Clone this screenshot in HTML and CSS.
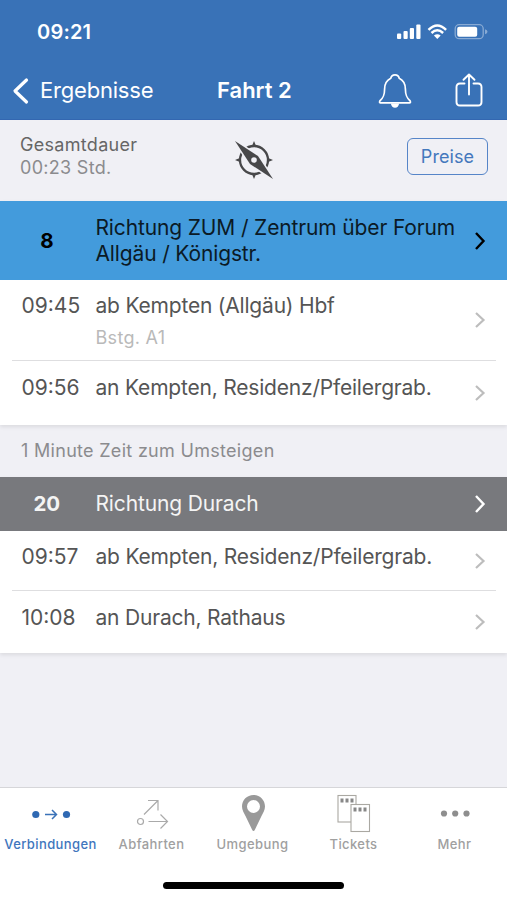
FILE: index.html
```html
<!DOCTYPE html>
<html lang="de">
<head>
  <meta charset="UTF-8">
  <title>Fahrt 2</title>
  <meta name="viewport" content="width=device-width, initial-scale=1.0">
  <link rel="stylesheet" href="styles.css">
</head>
<body>
  <header>
    <div class="status-bar">
      <span class="clock">09:21</span>
      <svg class="status-icons" width="92" height="18" viewBox="0 0 92 18">
        <g fill="#fff">
          <rect x="1" y="9.500" width="4.200" height="5.500" rx="1"/>
          <rect x="7.500" y="7" width="4.200" height="8" rx="1"/>
          <rect x="13.800" y="4" width="4.200" height="11" rx="1"/>
          <rect x="20.300" y="0.500" width="4.200" height="14.500" rx="1"/>
          <path d="M41.300 15 L37.900 11.500 Q41.300 9 44.700 11.500 Z"/>
        </g>
        <g fill="none" stroke="#fff" stroke-width="2.500">
          <path d="M32.500 5.800 Q41.300 -3 50.100 5.800"/>
          <path d="M35.500 9 Q41.300 3.500 47.100 9"/>
        </g>
        <rect x="59.200" y="0.700" width="28" height="14" rx="4" fill="none" stroke="#fff" stroke-opacity="0.400" stroke-width="1.300"/>
        <rect x="61.200" y="2.700" width="20" height="10" rx="2" fill="#fff"/>
        <path d="M89 5.300 Q91.500 6 91.500 7.700 Q91.500 9.400 89 10.200 Z" fill="#fff" fill-opacity="0.400"/>
      </svg>
    </div>
    <nav class="nav-bar">
      <a class="back">
        <svg width="17" height="28" viewBox="0 0 17 28"><path d="M14.500 3 L3 14 L14.500 25" fill="none" stroke="#fff" stroke-width="3.200" stroke-linecap="round" stroke-linejoin="round"/></svg>
        <span>Ergebnisse</span>
      </a>
      <h1>Fahrt 2</h1>
      <div class="actions">
        <svg width="34" height="36" viewBox="0 0 34 36">
          <path d="M17 1.800 C14.400 1.800 13.200 3.300 12.800 5.200 C8.500 7.300 6.600 11.500 6.600 16 C6.600 22.500 5.200 25 1.800 28 Q1 29.800 2.600 29.800 L31.400 29.800 Q33 29.800 32.200 28 C28.800 25 27.400 22.500 27.400 16 C27.400 11.500 25.500 7.300 21.200 5.200 C20.800 3.300 19.600 1.800 17 1.800 Z" fill="none" stroke="#fff" stroke-width="1.700" stroke-linejoin="round"/>
          <path d="M12.800 30.500 H21.200 Q20.300 34.700 17 34.700 Q13.700 34.700 12.800 30.500 Z" fill="#fff"/>
        </svg>
        <svg width="28" height="36" viewBox="0 0 28 36" fill="none" stroke="#fff" stroke-width="1.900" stroke-linecap="round">
          <path d="M9.500 10.500 H5 Q1.500 10.500 1.500 14 V29 Q1.500 32.500 5 32.500 H23 Q26.500 32.500 26.500 29 V14 Q26.500 10.500 23 10.500 H18.500"/>
          <path d="M14 21.500 V1.500 M8.500 6.800 L14 1.500 L19.500 6.800" stroke-linejoin="round"/>
        </svg>
      </div>
    </nav>
  </header>

  <section class="summary">
    <div class="duration">
      <div class="label">Gesamtdauer</div>
      <div class="value">00:23 Std.</div>
    </div>
    <svg class="compass" width="40" height="40" viewBox="0 0 40 40">
      <circle cx="20" cy="20" r="14" fill="none" stroke="#48484a" stroke-width="2.300"/>
      <g fill="#48484a">
        <path d="M20 1 L22.500 7 H17.500 Z M20 39 L17.500 33 H22.500 Z M1 20 L7 17.500 V22.500 Z M39 20 L33 22.500 V17.500 Z"/>
        <path d="M1 1 L24 16 L39 39 L16 24 Z" stroke="#f0f0f5" stroke-width="3"/>
        <path d="M1 1 L24 16 L39 39 L16 24 Z"/>
      </g>
      <circle cx="20" cy="20" r="2.800" fill="#f0f0f5"/>
    </svg>
    <button class="prices">Preise</button>
  </section>

  <main>
    <section class="leg">
      <div class="line line-blue">
        <span class="line-no">8</span>
        <span class="direction">Richtung ZUM / Zentrum über Forum Allgäu / Königstr.</span>
        <svg class="chevron" width="12" height="20" viewBox="0 0 12 20"><path d="M2 2 L9.500 10 L2 18"/></svg>
      </div>
      <div class="stop stop-platform">
        <span class="time">09:45</span>
        <div class="place">
          <div class="name">ab Kempten (Allgäu) Hbf</div>
          <div class="platform">Bstg. A1</div>
        </div>
        <svg class="chevron" width="12" height="20" viewBox="0 0 12 20"><path d="M2 3 L9.500 10 L2 17"/></svg>
      </div>
      <div class="stop stop-arrival">
        <span class="time">09:56</span>
        <div class="place">an Kempten, Residenz/Pfeilergrab.</div>
        <svg class="chevron" width="12" height="20" viewBox="0 0 12 20"><path d="M2 3 L9.500 10 L2 17"/></svg>
      </div>
    </section>

    <p class="transfer">1 Minute Zeit zum Umsteigen</p>

    <section class="leg">
      <div class="line line-grey">
        <span class="line-no">20</span>
        <span class="direction">Richtung Durach</span>
        <svg class="chevron" width="12" height="20" viewBox="0 0 12 20"><path d="M2 2 L9.500 10 L2 18"/></svg>
      </div>
      <div class="stop">
        <span class="time">09:57</span>
        <div class="place">ab Kempten, Residenz/Pfeilergrab.</div>
        <svg class="chevron" width="12" height="20" viewBox="0 0 12 20"><path d="M2 3 L9.500 10 L2 17"/></svg>
      </div>
      <div class="stop stop-last">
        <span class="time">10:08</span>
        <div class="place">an Durach, Rathaus</div>
        <svg class="chevron" width="12" height="20" viewBox="0 0 12 20"><path d="M2 3 L9.500 10 L2 17"/></svg>
      </div>
    </section>
  </main>

  <footer>
    <div class="tabs">
      <a class="tab active">
        <svg width="42" height="43" viewBox="0 0 42 43">
          <g fill="#2f69b3"><circle cx="5.800" cy="22.500" r="3.600"/><circle cx="36.500" cy="22.500" r="3.600"/></g>
          <path d="M15 22.500 H26.500 M22 18 L26.500 22.500 L22 27" fill="none" stroke="#3a72b8" stroke-width="1.500"/>
        </svg>
        <span>Verbindungen</span>
      </a>
      <a class="tab">
        <svg width="42" height="43" viewBox="0 0 42 43" fill="none" stroke="#aaa" stroke-width="1.200">
          <circle cx="9.500" cy="29.500" r="3"/>
          <path d="M13 22.500 L27 8.500 M17 8.500 H27 V18.500 M17.500 29.500 H36 M29.500 22.500 L36.500 29.500 L29.500 36.500"/>
        </svg>
        <span>Abfahrten</span>
      </a>
      <a class="tab">
        <svg width="42" height="43" viewBox="0 0 42 43">
          <path fill="#999" fill-rule="evenodd" d="M21.500 3 C15 3 10 8 10 14.500 C10 18 12 21 13.500 24 L20 37.500 Q21.500 40.500 23 37.500 L29.500 24 C31 21 33 18 33 14.500 C33 8 28 3 21.500 3 Z M21.500 8 A6.500 6.500 0 1 1 21.500 21 A6.500 6.500 0 1 1 21.500 8 Z"/>
        </svg>
        <span>Umgebung</span>
      </a>
      <a class="tab">
        <svg width="42" height="43" viewBox="0 0 42 43">
          <g fill="#fff" stroke="#aaa8a2" stroke-width="1.100">
            <rect x="5" y="3.500" width="18" height="26.500"/>
            <rect x="18" y="12.500" width="18.500" height="27"/>
          </g>
          <g fill="#888">
            <rect x="7.500" y="6.500" width="3" height="4"/><rect x="12.500" y="6.500" width="3" height="4"/><rect x="17.500" y="6.500" width="3" height="4"/>
            <rect x="20.500" y="15.500" width="3" height="4"/><rect x="25.500" y="15.500" width="3" height="4"/><rect x="30.500" y="15.500" width="3" height="4"/>
          </g>
        </svg>
        <span>Tickets</span>
      </a>
      <a class="tab">
        <svg width="42" height="43" viewBox="0 0 42 43" fill="#8e8e8e">
          <circle cx="10" cy="21.500" r="3.100"/><circle cx="21.200" cy="21.500" r="3.100"/><circle cx="32.500" cy="21.500" r="3.100"/>
        </svg>
        <span>Mehr</span>
      </a>
    </div>
    <div class="home-indicator"></div>
  </footer>
</body>
</html>
```
FILE: styles.css
```css
* {
  box-sizing: border-box;
}

body {
  margin: 0;
  height: 900px;
  display: flex;
  flex-direction: column;
  font-family: Inter, "Liberation Sans", sans-serif;
  background: #f0f0f5;
  color: #555;
}

header {
  height: 120px;
  background: #3972b7;
  border-bottom: 1px solid #3367b1;
  color: #fff;
}

.status-bar {
  height: 62px;
  padding: 2px 19px 0 37px;
  display: flex;
  justify-content: space-between;
  align-items: center;
}

.clock {
  font-size: 20px;
  font-weight: 600;
  letter-spacing: 0.2px;
}

.status-icons {
  margin-top: 1px;
}

.nav-bar {
  height: 57px;
  padding: 0 24px 0 12px;
  display: grid;
  grid-template-columns: 205px 1fr auto;
  align-items: center;
}

.back {
  display: flex;
  align-items: center;
  gap: 11px;
  font-size: 22px;
  letter-spacing: -0.2px;
}

.back span,
h1 {
  padding-bottom: 2px;
}

h1 {
  margin: 0;
  font-size: 22px;
  font-weight: 600;
  letter-spacing: 0;
}

.actions {
  display: flex;
  gap: 43px;
}

.summary {
  height: 81px;
  padding: 13px 19px 0 20px;
  display: grid;
  grid-template-columns: 1fr auto 1fr;
  align-items: start;
  font-size: 18px;
  line-height: 23px;
  letter-spacing: 0.3px;
}

.label {
  color: #666;
}

.value {
  color: #8b8b8e;
}

.compass {
  margin-top: 7px;
}

.prices {
  justify-self: end;
  width: 81px;
  height: 37px;
  margin-top: 5px;
  padding: 0;
  border: 1.500px solid #5685c8;
  border-radius: 6px;
  background: none;
  color: #4478bd;
  font-family: inherit;
  font-size: 18px;
  letter-spacing: 0.1px;
}

.leg {
  background: #fff;
  box-shadow: 0 2px 4px rgba(0, 0, 0, 0.09);
}

.line,
.stop {
  display: grid;
  grid-template-columns: 95.500px 1fr auto;
  align-items: center;
  padding-right: 21px;
  font-size: 21px;
  line-height: 26px;
  letter-spacing: -0.2px;
}

.chevron path {
  fill: none;
  stroke: #bdbdbd;
  stroke-width: 2.200px;
}

.line-no {
  font-size: 20.500px;
  font-weight: 700;
  text-align: center;
  padding-right: 2px;
}

.direction {
  letter-spacing: -0.140px;
}

.line-blue {
  height: 79px;
  background: #439bdc;
  color: #0b1a26;
}

.line-blue .line-no {
  color: #000;
}

.line-blue .chevron path {
  stroke: #000;
  stroke-width: 2.400px;
}

.line-grey {
  height: 54px;
  background: #78797d;
  color: #f4f4f4;
}

.line-grey .chevron path {
  stroke: #fff;
  stroke-width: 2.400px;
}

.stop {
  position: relative;
  height: 59px;
}

.stop + .stop::before {
  content: "";
  position: absolute;
  top: 0;
  left: 12px;
  right: 11px;
  height: 1px;
  background: #dedee0;
}

.time,
.place {
  align-self: start;
  padding-top: 13px;
}

.time {
  padding-left: 21.500px;
  letter-spacing: 0;
}

.stop-platform {
  height: 80px;
}

.platform {
  margin-top: 6px;
  font-size: 18px;
  letter-spacing: 0.3px;
  color: #b9b9b9;
}

.stop-arrival {
  height: 65px;
}

.stop-arrival .time,
.stop-arrival .place,
.stop-last .time,
.stop-last .place {
  padding-top: 15px;
}

.stop-last {
  height: 63px;
}

.transfer {
  margin: 0;
  height: 52px;
  padding-left: 21px;
  font-size: 18px;
  line-height: 52px;
  letter-spacing: 0.3px;
  color: #8b8b8e;
}

footer {
  margin-top: auto;
  height: 113px;
  background: #fff;
  border-top: 1px solid #d6d6d9;
  display: flex;
  flex-direction: column;
  align-items: center;
}

.tabs {
  width: 100%;
  padding: 4px 2px 0 0;
  display: grid;
  grid-template-columns: repeat(5, 1fr);
}

.tab {
  display: flex;
  flex-direction: column;
  align-items: center;
  font-size: 13px;
  font-weight: 500;
  line-height: 18px;
  letter-spacing: 0.4px;
  color: #a0a0a0;
}

.active {
  color: #3f76bd;
}

.home-indicator {
  width: 181px;
  height: 7px;
  margin-top: 29px;
  border-radius: 4px;
  background: #000;
}
```
